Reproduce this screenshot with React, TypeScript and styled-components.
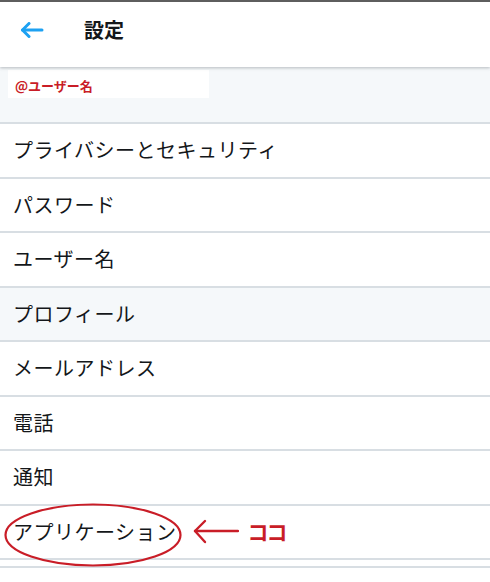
import React from "react";
import styled, { createGlobalStyle } from "styled-components";

const Global = createGlobalStyle`
  html, body { margin: 0; padding: 0; background: #ffffff; }
  body { font-family: "Noto Sans CJK JP", "Noto Sans", sans-serif; width: 490px; overflow: hidden; }
`;

const Page = styled.div`
  width: 490px;
  height: 582px;
  display: flex;
  flex-direction: column;
  background: #ffffff;
`;

const Header = styled.header`
  position: relative;
  z-index: 2;
  height: 67px;
  flex-shrink: 0;
  box-sizing: border-box;
  border-top: 2px solid #5e5e5e;
  padding: 0 0 9px 20px;
  display: flex;
  align-items: center;
  gap: 40px;
  background: #ffffff;
  box-shadow: 0 1px 3px rgba(60, 70, 80, 0.35);
`;

const Title = styled.h1`
  margin: 0;
  font-size: 20px;
  font-weight: 700;
  color: #14171a;
  line-height: 1;
`;

const Band = styled.div`
  height: 55px;
  flex-shrink: 0;
  box-sizing: border-box;
  background: #f5f8fa;
  padding: 3px 0 0 8px;
`;

const NameBox = styled.div`
  width: 201px;
  height: 28px;
  box-sizing: border-box;
  background: #ffffff;
  padding: 2px 0 0 7px;
  display: flex;
  align-items: center;
  color: #c91d27;
  font-size: 13px;
  font-weight: 700;
`;

const List = styled.div`
  display: flex;
  flex-direction: column;
`;

const Row = styled.div<{ $shaded?: boolean }>`
  position: relative;
  height: 54.5px;
  flex-shrink: 0;
  box-sizing: border-box;
  border-top: 2px solid #d8dee3;
  background: ${(p) => (p.$shaded ? "#f5f8fa" : "#ffffff")};
  padding-left: 13px;
  display: flex;
  align-items: center;
`;

const Label = styled.span`
  font-size: 20px;
  color: #14171a;
  line-height: 1;
  letter-spacing: 0.5px;
`;

const Tail = styled.div`
  height: 6px;
  border-bottom: 2px solid #d8dee3;
  border-top: 2px solid #d8dee3;
`;

const Circle = styled.svg`
  position: absolute;
  left: 4px;
  top: -3px;
  width: 178px;
  height: 64px;
  overflow: visible;
  pointer-events: none;
  z-index: 3;
`;

const Pointer = styled.div`
  margin-left: 16px;
  display: flex;
  align-items: center;
  gap: 9px;
`;

const Koko = styled.span`
  color: #c91d27;
  font-size: 21px;
  font-weight: 700;
  line-height: 1;
  letter-spacing: -2px;
`;

const BackArrow = () => (
  <svg width="24" height="16" viewBox="0 0 24 16">
    <g fill="none" stroke="#1da1f2" strokeWidth="3" strokeLinecap="round" strokeLinejoin="round">
      <line x1="2.5" y1="8" x2="22" y2="8" />
      <polyline points="9,1.5 2.5,8 9,14.5" />
    </g>
  </svg>
);

const RedArrow = () => (
  <svg width="46" height="26" viewBox="0 0 46 26">
    <g fill="none" stroke="#c91d27" strokeWidth="2.4" strokeLinecap="round" strokeLinejoin="round">
      <line x1="2" y1="12" x2="45" y2="12" />
      <polyline points="12,2 2,12 12,23" />
    </g>
  </svg>
);

const items = [
  "プライバシーとセキュリティ",
  "パスワード",
  "ユーザー名",
  "プロフィール",
  "メールアドレス",
  "電話",
  "通知",
];

export default function App() {
  return (
    <>
      <Global />
      <Page>
        <Header>
          <BackArrow />
          <Title>設定</Title>
        </Header>
        <Band>
          <NameBox>@ユーザー名</NameBox>
        </Band>
        <List>
          {items.map((t) => (
            <Row key={t} $shaded={t === "プロフィール"}>
              <Label>{t}</Label>
            </Row>
          ))}
          <Row>
            <Label>アプリケーション</Label>
            <Pointer>
              <RedArrow />
              <Koko>ココ</Koko>
            </Pointer>
            <Circle viewBox="0 0 178 64">
              <ellipse cx="89" cy="32" rx="87.5" ry="30.5" fill="none" stroke="#c91d27" strokeWidth="2.2" />
            </Circle>
          </Row>
          <Tail />
        </List>
      </Page>
    </>
  );
}
